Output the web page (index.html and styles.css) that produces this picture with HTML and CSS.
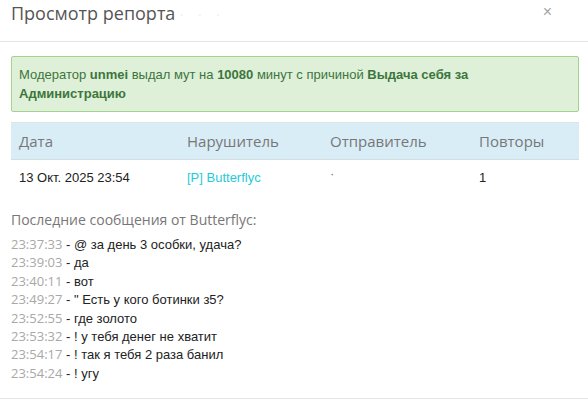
FILE: index.html
```html
<!DOCTYPE html>
<html lang="ru">
<head>
<meta charset="utf-8">
<title>Просмотр репорта</title>
<link rel="stylesheet" href="styles.css">
</head>
<body>
<div class="modal">
  <div class="modal-header">
    <h4 class="modal-title">Просмотр репорта <span class="blur">· · ·</span></h4>
    <span class="close">×</span>
  </div>
  <div class="modal-body">
    <div class="alert">Модератор <b>unmei</b> выдал мут на <b>10080</b> минут с причиной <b>Выдача себя за Администрацию</b></div>
    <div class="report-table">
      <div class="row head">
        <div class="cell">Дата</div>
        <div class="cell">Нарушитель</div>
        <div class="cell">Отправитель</div>
        <div class="cell">Повторы</div>
      </div>
      <div class="row body">
        <div class="cell">13 Окт. 2025 23:54</div>
        <div class="cell"><span class="user">[P] Butterflyc</span></div>
        <div class="cell"><span class="dot">·</span></div>
        <div class="cell">1</div>
      </div>
    </div>
    <div class="section-title">Последние сообщения от Butterflyc:</div>
    <ul class="messages">
      <li><span class="time">23:37:33</span> - @ за день 3 особки, удача?</li>
      <li><span class="time">23:39:03</span> - да</li>
      <li><span class="time">23:40:11</span> - вот</li>
      <li><span class="time">23:49:27</span> - " Есть у кого ботинки з5?</li>
      <li><span class="time">23:52:55</span> - где золото</li>
      <li><span class="time">23:53:32</span> - ! у тебя денег не хватит</li>
      <li><span class="time">23:54:17</span> - ! так я тебя 2 раза банил</li>
      <li><span class="time">23:54:24</span> - ! угу</li>
    </ul>
  </div>
  <div class="modal-footer"></div>
</div>
</body>
</html>
```

FILE: styles.css
```css
html, body {
  margin: 0;
  padding: 0;
  background: #fff;
}
body {
  font-family: "Liberation Sans", Arial, sans-serif;
  font-size: 13px;
  color: #222;
  width: 588px;
  height: 406px;
  overflow: hidden;
}
.modal-header {
  display: flex;
  justify-content: space-between;
  align-items: flex-start;
  height: 42px;
  box-sizing: border-box;
  padding: 1px 36px 0 11px;
  border-bottom: 1px solid #e5e5e5;
}
.modal-title {
  margin: 0;
  font-family: "Open Sans", sans-serif;
  font-weight: 400;
  font-size: 18px;
  line-height: 24px;
  color: #555;
}
.blur {
  color: #ececec;
  font-size: 12px;
  line-height: 1;
  letter-spacing: 6px;
}
.close {
  font-family: "Liberation Sans", Arial, sans-serif;
  font-size: 16px;
  line-height: 20px;
  color: #a5a5a5;
  margin-top: 1px;
}
.modal-body {
  padding: 14px 9px 0 11px;
}
.alert {
  background: #dff0d8;
  border: 1px solid #a3d48f;
  border-radius: 2px;
  color: #3c763d;
  padding: 8px 7px;
  line-height: 19px;
}
.alert b {
  font-weight: 700;
}
.report-table {
  margin-top: 10px;
}
.row {
  display: grid;
  grid-template-columns: 168px 143px 149px 1fr;
}
.row.head {
  background: #d9edf7;
  border-top: 1px solid #e3e3e3;
  border-bottom: 1px solid #d2dde4;
  font-family: "Open Sans", sans-serif;
  font-size: 15px;
  color: #777;
}
.row.head .cell {
  padding: 8px 8px 7px;
  line-height: 21px;
}
.row.body .cell {
  padding: 8px 8px;
  line-height: 19px;
}
.user {
  color: #1fcbd8;
}
.dot {
  position: relative;
  top: -4px;
  color: #777;
}
.section-title {
  margin-top: 15px;
  font-family: "Open Sans", sans-serif;
  font-size: 14px;
  line-height: 20px;
  color: #777;
}
.messages {
  list-style: none;
  margin: 6px 0 0;
  padding: 0;
}
.messages li {
  line-height: 18.4px;
  height: 18.4px;
}
.time {
  font-family: "Open Sans", sans-serif;
  line-height: 1;
  color: #a8a8a8;
}
.modal-footer {
  position: absolute;
  left: 0;
  right: 0;
  top: 398px;
  border-top: 1px solid #e5e5e5;
}
```
